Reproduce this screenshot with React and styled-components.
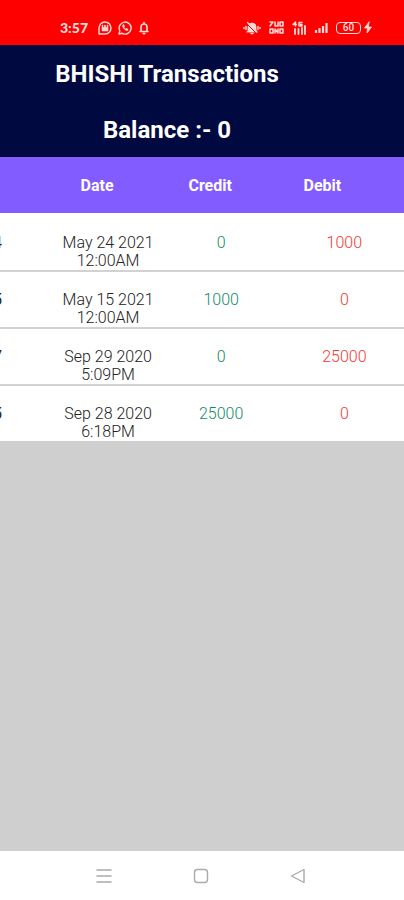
import React from "react";
import styled, { createGlobalStyle } from "styled-components";

const GlobalStyle = createGlobalStyle`
  * { box-sizing: border-box; }
  body { margin: 0; font-family: Roboto, "Liberation Sans", sans-serif; background: #cfcfcf; }
`;

const Screen = styled.div`
  display: flex;
  flex-direction: column;
  min-height: 100vh;
  background: #cfcfcf;
`;

const StatusBar = styled.div`
  display: flex;
  align-items: center;
  justify-content: space-between;
  height: 45px;
  padding: 10px 31px 0 60px;
  background: #ff0000;
  color: #ffdcd8;
`;

const StatusGroup = styled.div`
  display: flex;
  align-items: center;
  gap: ${(p) => p.$gap};
`;

const Clock = styled.time`
  margin-right: 4px;
  font: 900 14px/18px Lato, Roboto, sans-serif;
`;

const Icon = styled.svg`
  display: block;
  flex: none;
  fill: none;
  stroke: currentColor;
  stroke-width: 1.4;
  stroke-linecap: round;
  stroke-linejoin: round;
`;

const Header = styled.header`
  display: flex;
  flex-direction: column;
  align-items: center;
  gap: 28px;
  padding: 15px 70px 13px 0;
  background: #000940;
  color: #fff;
`;

const Title = styled.h1`
  margin: 0;
  font-size: 24px;
  line-height: 28px;
  font-weight: 700;
  white-space: nowrap;
`;

const Balance = styled(Title).attrs({ as: "p" })``;

const Table = styled.table`
  width: 100%;
  table-layout: fixed;
  border-spacing: 0;
  background: #fff;
  font-size: 16px;
  line-height: 18px;
`;

const Column = styled.col`
  width: ${(p) => p.$width};
`;

const HeadCell = styled.th`
  height: 56px;
  padding: 2px ${(p) => p.$inset || "0"} 0 0;
  background: #835cff;
  color: #fff;
  font-weight: 700;
  text-align: center;
`;

const Cell = styled.td`
  height: 57px;
  padding: 19px ${(p) => p.$right || "0"} 0 ${(p) => p.$left || "0"};
  border-top: 2px solid #d2d2d2;
  color: ${(p) => p.$color || "#222"};
  font-weight: 300;
  text-align: center;
  vertical-align: top;
`;

const Row = styled.tr`
  &:first-child ${Cell} { border-top-color: #fff; }
`;

const ClippedEntry = styled.span`
  display: flex;
  justify-content: flex-end;
  width: 2px;
  overflow: hidden;
  font-weight: 400;
`;

const Line = styled.span`
  display: block;
`;

const NavBar = styled.nav`
  display: flex;
  align-items: center;
  justify-content: space-between;
  height: 49px;
  margin-top: auto;
  padding: 0 98px 0 96px;
  background: #fff;
`;

const NavButton = styled.button`
  display: block;
  padding: 0;
  border: 0;
  background: none;
  color: #aaa;
`;

const transactions = [
  { entry: "4", date: "May 24 2021", time: "12:00AM", credit: 0, debit: 1000 },
  { entry: "5", date: "May 15 2021", time: "12:00AM", credit: 1000, debit: 0 },
  { entry: "7", date: "Sep 29 2020", time: "5:09PM", credit: 0, debit: 25000 },
  { entry: "5", date: "Sep 28 2020", time: "6:18PM", credit: 25000, debit: 0 },
];

function NoticeIcons() {
  return (
    <>
      <Icon width="14" height="14" viewBox="0 0 14 14">
        <path d="M1 13V7a6 6 0 1 1 6 6Z" />
        <path d="M4.500 4.500v5h5v-5M7 4.500v2" strokeWidth="1.500" />
        <path d="M5 6.500h4v2.500h-4Z" fill="currentColor" strokeWidth="0.500" />
      </Icon>
      <Icon width="14" height="14" viewBox="0 0 14 14">
        <path d="M1 13l.8-3.2A6 6 0 1 1 4.2 12.3Z" />
        <path d="M4.800 4.200c-.8 2 2.400 5.600 4.800 5.200l.4-1.100-1.500-.8-.8.6C6.800 7.700 6.200 7 5.900 6.200l.6-.7-.6-1.500Z" fill="currentColor" strokeWidth="0.800" />
      </Icon>
      <Icon width="12" height="14" viewBox="0 0 12 14">
        <path d="M2 10.500h8M3 10V6a3 3 0 0 1 6 0v4M6 1.500V3M5.200 12.600h1.600" strokeWidth="1.600" />
      </Icon>
    </>
  );
}

function SystemIcons() {
  return (
    <>
      <Icon width="18" height="14" viewBox="0 0 18 14">
        <path d="M5 10V6a4 4 0 0 1 8 0v4l1 1H4Z" fill="currentColor" strokeWidth="0.8" />
        <path d="M1 6.500v1M3 5.500v3M17 6.500v1M15 5.500v3M8 12.500h2" />
        <path d="M4 3l9 9" stroke="#ff0000" strokeWidth="1" />
        <path d="M4.500 1.500l9.500 9.500" strokeWidth="1.200" />
      </Icon>
      <Icon width="15" height="13" viewBox="0 0 15 13">
        <path d="M1 1h3L1 5M1 8h3v4H1ZM6 1v4h3V1M6 12V8l3 4V8M11 1h3v4h-3ZM11 8h3v4h-3Z" strokeWidth="1.500" />
      </Icon>
      <Icon width="14" height="14" viewBox="0 0 14 14">
        <path d="M3.500 5V1L1 3.500h3.500M10 1.500H7V5h3V3.500H8.500" strokeWidth="1.400" />
        <path d="M3 8v5M6.500 8v5M10 7v6M13 5v8" strokeWidth="1.800" />
      </Icon>
      <Icon width="14" height="12" viewBox="0 0 14 12">
        <path d="M2 8v3M5.500 6v5M9 4v7M12.500 1v10" strokeWidth="2.200" strokeLinecap="butt" />
      </Icon>
    </>
  );
}

const BatteryGroup = styled.div`
  display: flex;
  align-items: center;
  gap: 2px;
`;

const Battery = styled.span`
  width: 25px;
  height: 12px;
  border: 1px solid currentColor;
  border-radius: 4px;
  font-size: 10px;
  line-height: 10px;
  font-weight: 500;
  text-align: center;
`;

export default function App() {
  return (
    <Screen>
      <GlobalStyle />
      <StatusBar>
        <StatusGroup $gap="6px">
          <Clock>3:57</Clock>
          <NoticeIcons />
        </StatusGroup>
        <StatusGroup $gap="8px">
          <SystemIcons />
          <BatteryGroup>
            <Battery>60</Battery>
            <Icon width="10" height="13" viewBox="0 0 10 13">
              <path d="M6 1L1.500 7h3L4 12l4.500-6h-3Z" fill="currentColor" strokeWidth="0.800" />
            </Icon>
          </BatteryGroup>
        </StatusGroup>
      </StatusBar>
      <Header>
        <Title>BHISHI Transactions</Title>
        <Balance>Balance :- 0</Balance>
      </Header>
      <Table>
        <colgroup>
          <Column $width="13%" />
          <Column $width="28%" />
          <Column $width="28%" />
          <Column $width="31%" />
        </colgroup>
        <thead>
          <tr>
            <HeadCell aria-label="Entry" />
            <HeadCell $inset="24px">Date</HeadCell>
            <HeadCell $inset="24px">Credit</HeadCell>
            <HeadCell $inset="38px">Debit</HeadCell>
          </tr>
        </thead>
        <tbody>
          {transactions.map((t) => (
            <Row key={t.date}>
              <Cell>
                <ClippedEntry>{t.entry}</ClippedEntry>
              </Cell>
              <Cell $right="2px">
                <Line>{t.date}</Line>
                <Line>{t.time}</Line>
              </Cell>
              <Cell $right="2px" $color="#138a6b">{t.credit}</Cell>
              <Cell $left="6px" $color="#f5382f">{t.debit}</Cell>
            </Row>
          ))}
        </tbody>
      </Table>
      <NavBar>
        <NavButton aria-label="Recent apps">
          <Icon width="16" height="16" viewBox="0 0 16 16">
            <path d="M1 2h14M1 8h14M1 14h14" />
          </Icon>
        </NavButton>
        <NavButton aria-label="Home">
          <Icon width="16" height="16" viewBox="0 0 16 16">
            <rect x="1.500" y="1.500" width="13" height="13" rx="3" />
          </Icon>
        </NavButton>
        <NavButton aria-label="Back">
          <Icon width="16" height="16" viewBox="0 0 16 16">
            <path d="M14 1.500v13L1.500 8Z" />
          </Icon>
        </NavButton>
      </NavBar>
    </Screen>
  );
}
